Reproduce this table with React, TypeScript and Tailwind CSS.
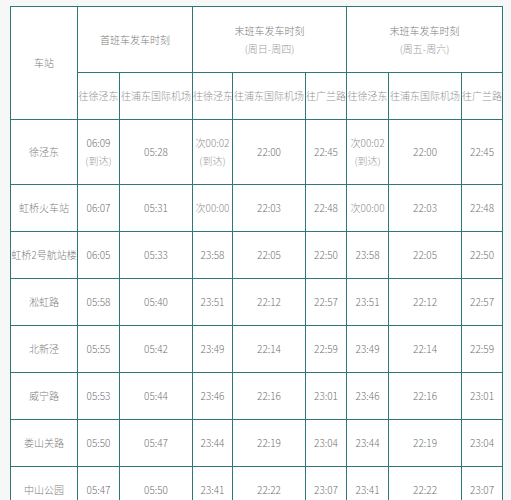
const rows: [string, string[]][] = [
  ["徐泾东", ["06:09\n(到达)", "05:28", "次00:02\n(到达)", "22:00", "22:45", "次00:02\n(到达)", "22:00", "22:45"]],
  ["虹桥火车站", ["06:07", "05:31", "次00:00", "22:03", "22:48", "次00:00", "22:03", "22:48"]],
  ["虹桥2号航站楼", ["06:05", "05:33", "23:58", "22:05", "22:50", "23:58", "22:05", "22:50"]],
  ["淞虹路", ["05:58", "05:40", "23:51", "22:12", "22:57", "23:51", "22:12", "22:57"]],
  ["北新泾", ["05:55", "05:42", "23:49", "22:14", "22:59", "23:49", "22:14", "22:59"]],
  ["威宁路", ["05:53", "05:44", "23:46", "22:16", "23:01", "23:46", "22:16", "23:01"]],
  ["娄山关路", ["05:50", "05:47", "23:44", "22:19", "23:04", "23:44", "22:19", "23:04"]],
  ["中山公园", ["05:47", "05:50", "23:41", "22:22", "23:07", "23:41", "22:22", "23:07"]],
];

const widths = [67, 42, 73, 40, 73, 41, 42, 73, 41];
const dirs = ["往徐泾东", "往浦东国际机场", "往徐泾东", "往浦东国际机场", "往广兰路", "往徐泾东", "往浦东国际机场", "往广兰路"];

const cell = "border border-[#2f7676] text-center align-middle whitespace-nowrap p-0 font-light";

function Lines({ text }: { text: string }) {
  const parts = text.split("\n");
  return (
    <>
      {parts.map((p, i) => (
        <div key={i} className={i > 0 ? "text-[#9a9a9a]" : undefined}>
          {p}
        </div>
      ))}
    </>
  );
}

export default function App() {
  return (
    <div
      className="min-h-screen bg-[#f6f7f7] pt-[6px] pl-[10px]"
      style={{ fontFamily: '"Noto Sans CJK SC", "Noto Sans", sans-serif' }}
    >
      <table className="table-fixed border-collapse bg-white text-[10px] leading-[18px] text-[#8c8c8c]" style={{ width: 492 }}>
        <colgroup>
          {widths.map((w, i) => (
            <col key={i} style={{ width: w }} />
          ))}
        </colgroup>
        <thead>
          <tr className="h-[66px]">
            <th rowSpan={2} className={`${cell} text-[#7c7c7c]`}>车站</th>
            <th colSpan={2} className={`${cell} text-[#7c7c7c]`}>首班车发车时刻</th>
            <th colSpan={3} className={`${cell} text-[#7c7c7c]`}>
              <div>末班车发车时刻</div>
              <div className="text-[#9a9a9a]">(周日-周四)</div>
            </th>
            <th colSpan={3} className={`${cell} text-[#7c7c7c]`}>
              <div>末班车发车时刻</div>
              <div className="text-[#9a9a9a]">(周五-周六)</div>
            </th>
          </tr>
          <tr className="h-[47px]">
            {dirs.map((d, i) => (
              <th key={i} className={`${cell} text-[#939393]`}>{d}</th>
            ))}
          </tr>
        </thead>
        <tbody>
          {rows.map(([name, times], r) => (
            <tr key={name} className={r === 0 ? "h-[65px]" : "h-[47px]"}>
              <td className={`${cell} text-[#808080]`}>{name}</td>
              {times.map((t, i) => (
                <td key={i} className={`${cell} ${t.startsWith("次") ? "text-[#8c8c8c]" : "text-[#707070]"}`}>
                  <Lines text={t} />
                </td>
              ))}
            </tr>
          ))}
        </tbody>
      </table>
    </div>
  );
}
